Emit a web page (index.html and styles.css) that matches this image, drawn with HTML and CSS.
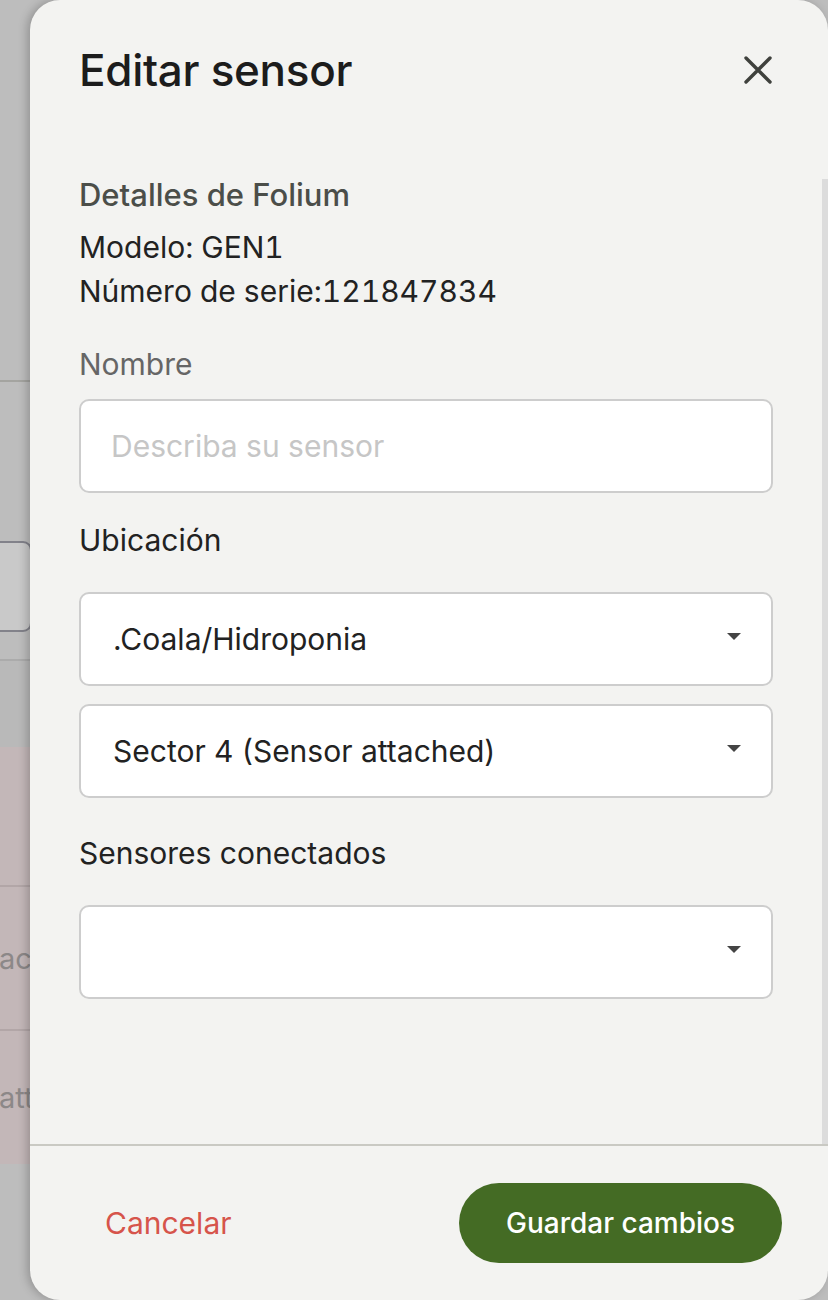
FILE: index.html
```html
<!DOCTYPE html>
<html lang="es">
<head>
    <meta charset="UTF-8">
    <meta name="viewport" content="width=device-width, initial-scale=1.0">
    <title>Editar sensor</title>
    <link rel="stylesheet" href="styles.css">
</head>
<body>

<!-- Page underneath the drawer (only the left edge shows) -->
<div class="page-edge">
    <div class="pe-head"></div>
    <div class="pe-filter">
        <div class="pe-field"></div>
    </div>
    <div class="pe-tabs"></div>
    <div class="pe-rows">
        <div class="pe-row"></div>
        <div class="pe-row"><span>ached)</span></div>
        <div class="pe-row"><span>attached)</span></div>
    </div>
</div>

<!-- Edit drawer -->
<div class="drawer">
    <div class="drawer-header">
        <h2 class="drawer-title">Editar sensor</h2>
        <button class="close-btn" type="button" aria-label="Cerrar">
            <svg width="28" height="28" viewBox="0 0 28 28">
                <path d="M2 2 L26 26 M26 2 L2 26" stroke="#3f413d" stroke-width="3.4" stroke-linecap="round"/>
            </svg>
        </button>
    </div>

    <div class="drawer-body">
        <form class="drawer-content" id="sensorForm">
            <h3 class="section-title">Detalles de Folium</h3>
            <p class="detail">Modelo: GEN1</p>
            <p class="detail">Número de serie:121847834</p>

            <label class="field-label muted" for="sensorName">Nombre</label>
            <input class="field name-field" type="text" id="sensorName" placeholder="Describa su sensor">

            <label class="field-label loc-label">Ubicación</label>
            <div class="select first">
                <span>.Coala/Hidroponia</span>
                <i class="caret"></i>
            </div>
            <div class="select second">
                <span>Sector 4 (Sensor attached)</span>
                <i class="caret"></i>
            </div>

            <label class="field-label conn-label">Sensores conectados</label>
            <div class="select first">
                <span></span>
                <i class="caret"></i>
            </div>
        </form>
        <div class="scroll-track"></div>
    </div>

    <div class="drawer-footer">
        <button class="cancel-btn" type="button">Cancelar</button>
        <button class="save-btn" type="submit" form="sensorForm">Guardar cambios</button>
    </div>
</div>

</body>
</html>
```

FILE: styles.css
```css
body {
    margin: 0;
    height: 1300px;
    display: flex;
    overflow: hidden;
    background-color: #bdbdbd;
    font-family: Inter, "Noto Sans", sans-serif;
    color: #222;
}

/* page behind the drawer */
.page-edge {
    width: 30px;
    flex-shrink: 0;
    overflow: hidden;
}
.pe-head {
    height: 380px;
    border-bottom: 2px solid #a4a4a0;
}
.pe-filter {
    height: 279px;
    padding-top: 159px;
    box-sizing: border-box;
    border-bottom: 2px solid #ababab;
}
.pe-field {
    width: 40px;
    height: 87px;
    margin-left: -12px;
    border: 2px solid #82828a;
    border-radius: 9px;
    background-color: #c9c9c9;
}
.pe-tabs {
    height: 86px;
    background-color: #b9b9b9;
}
.pe-rows {
    background-color: #c3b7b8;
}
.pe-row {
    height: 142px;
    border-bottom: 2px solid #b2a6a7;
    display: flex;
    align-items: center;
    white-space: nowrap;
    font-size: 29px;
    color: #8c8888;
}
.pe-row:first-child {
    height: 138px;
}
.pe-row:last-child {
    border-bottom: none;
    height: 133px;
}
.pe-row span {
    margin-left: -1px;
}

/* drawer */
.drawer {
    width: 798px;
    height: 1300px;
    flex-shrink: 0;
    display: flex;
    flex-direction: column;
    background-color: #f3f3f1;
    border-radius: 30px;
    box-shadow: -3px 0 10px rgba(0, 0, 0, 0.22);
}
.drawer-header {
    height: 179px;
    box-sizing: border-box;
    padding: 46px 56px 0 49px;
    display: flex;
    justify-content: space-between;
    align-items: flex-start;
}
.drawer-title {
    margin: 0;
    font-size: 44px;
    line-height: 48px;
    font-weight: 500;
    color: #1c1c1c;
    letter-spacing: -0.3px;
}
.close-btn {
    margin-top: 10px;
    padding: 0;
    border: none;
    background: none;
    cursor: pointer;
    line-height: 0;
}

.drawer-body {
    height: 965px;
    display: flex;
}
.drawer-content {
    flex: 1;
    padding: 0 49px;
    display: flex;
    flex-direction: column;
}
.scroll-track {
    width: 6px;
    background-color: #dcdcdc;
}

.section-title {
    margin: 0 0 14px;
    font-size: 31px;
    line-height: 32px;
    font-weight: 500;
    color: #4b4e49;
}
.detail {
    margin: 0;
    font-size: 30px;
    line-height: 44px;
    color: #222;
    font-variant-numeric: tabular-nums;
}
.field-label {
    font-size: 30px;
    line-height: 44px;
    color: #222;
    margin-top: 29px;
}
.field-label.muted {
    color: #666;
}
.loc-label {
    margin-top: 25px;
}
.conn-label {
    margin-top: 33px;
}

.field, .select {
    height: 94px;
    box-sizing: border-box;
    border: 2px solid #cdcdcd;
    border-radius: 10px;
    background-color: white;
    font-family: inherit;
    font-size: 30px;
    color: #222;
}
.field {
    width: 100%;
    margin-top: 13px;
    padding: 0 30px;
    outline: none;
}
.field::placeholder {
    color: #c6c6c6;
}
.select {
    display: flex;
    align-items: center;
    justify-content: space-between;
    padding: 0 30px 0 32px;
}
.select.first {
    margin-top: 30px;
}
.select.second {
    margin-top: 18px;
}
.caret {
    width: 0;
    height: 0;
    margin-top: -6px;
    border-left: 7px solid transparent;
    border-right: 7px solid transparent;
    border-top: 7px solid #444;
}

.drawer-footer {
    flex: 1;
    border-top: 2px solid #c9c9c3;
    display: flex;
    align-items: center;
    justify-content: space-between;
    padding: 0 46px 0 75px;
}
.cancel-btn {
    padding: 0;
    border: none;
    background: none;
    font-family: inherit;
    font-size: 30px;
    color: #d6544b;
    cursor: pointer;
}
.save-btn {
    width: 323px;
    height: 80px;
    border: none;
    border-radius: 40px;
    background-color: #446b24;
    color: white;
    font-family: inherit;
    font-size: 28px;
    font-weight: 500;
    cursor: pointer;
}
.save-btn:hover {
    background-color: #3c5f1f;
}
```
